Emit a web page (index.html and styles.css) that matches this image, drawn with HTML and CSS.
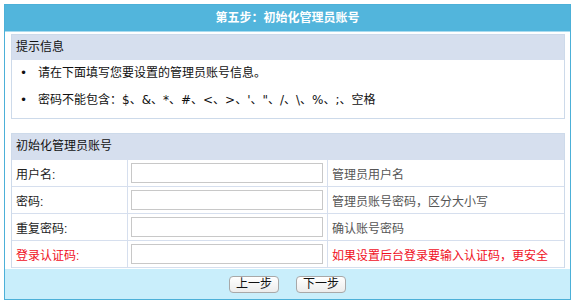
FILE: index.html
```html
<!DOCTYPE html>
<html lang="zh-CN">
<head>
    <meta charset="UTF-8">
    <title>第五步：初始化管理员账号</title>
    <link rel="stylesheet" href="styles.css">
</head>
<body>
    <div class="wrap">
        <div class="title">第五步：初始化管理员账号</div>

        <div class="content">
            <div class="panel">
                <div class="panel-hd">提示信息</div>
                <ul class="tips">
                    <li>请在下面填写您要设置的管理员账号信息。</li>
                    <li>密码不能包含：$、&amp;、*、#、&lt;、&gt;、'、"、/、\、%、;、空格</li>
                </ul>
            </div>

            <div class="panel panel-form">
                <div class="panel-hd">初始化管理员账号</div>
                <table class="form-table">
                    <tr>
                        <td class="label">用户名:</td>
                        <td class="field"><input type="text"></td>
                        <td class="note">管理员用户名</td>
                    </tr>
                    <tr>
                        <td class="label">密码:</td>
                        <td class="field"><input type="password"></td>
                        <td class="note">管理员账号密码，区分大小写</td>
                    </tr>
                    <tr>
                        <td class="label">重复密码:</td>
                        <td class="field"><input type="password"></td>
                        <td class="note">确认账号密码</td>
                    </tr>
                    <tr class="red">
                        <td class="label">登录认证码:</td>
                        <td class="field"><input type="text"></td>
                        <td class="note">如果设置后台登录要输入认证码，更安全</td>
                    </tr>
                </table>
            </div>
        </div>

        <div class="footer">
            <button type="button">上一步</button>
            <button type="button">下一步</button>
        </div>
    </div>
</body>
</html>
```

FILE: styles.css
```css
body {
    margin: 4px;
    background: #fff;
    font-family: "Liberation Sans", "Noto Sans CJK SC", sans-serif;
    font-size: 12px;
    color: #222;
}

.wrap {
    border: 1px solid #4cb0d8;
}

.title {
    background: #52b5dc;
    color: #fff;
    font-weight: bold;
    text-align: center;
    height: 26px;
    line-height: 26px;
    font-size: 12px;
    border-bottom: 1px solid #a9dbef;
}

.content {
    padding: 2px 5px 0 6px;
}

.panel {
    border: 1px solid #cddaea;
}

.panel-form {
    margin-top: 14px;
    border-bottom: none;
}

.panel-hd {
    background: #d6dfee;
    height: 25px;
    line-height: 25px;
    padding-left: 4px;
    font-size: 12px;
    color: #111;
}

/* lista de dicas com marcador proprio */
.tips {
    list-style: none;
    margin: 0;
    padding: 0 0 4px 0;
    background: #fff;
    font-family: "DejaVu Sans", "Noto Sans CJK SC", sans-serif;
}

.tips li {
    height: 27px;
    line-height: 27px;
    padding-left: 8px;
    overflow: hidden;
    color: #111;
}

.tips li::before {
    content: "\2022";
    display: inline-block;
    width: 18px;
}

.form-table {
    width: 100%;
    border-collapse: collapse;
}

.form-table td {
    border-top: 1px solid #d6dfee;
    border-bottom: 1px solid #d6dfee;
    height: 26px;
    padding: 0;
}

.form-table td + td {
    border-left: 1px solid #d6dfee;
}

.label {
    width: 111px;
    padding-left: 4px !important;
    color: #222;
}

.field {
    width: 196px;
    padding-left: 3px !important;
}

.field input {
    display: block;
    box-sizing: border-box;
    width: 192px;
    height: 20px;
    margin: 0;
    border: 1px solid #c8c8c8;
    padding: 0 3px;
}

.note {
    padding-left: 4px !important;
    color: #555;
}

.red td {
    color: #f0101e;
}

.footer {
    margin-top: 1px;
    background: #c9eefb;
    height: 30px;
    display: flex;
    justify-content: center;
    align-items: center;
    gap: 17px;
}

.footer button {
    height: 17px;
    padding: 0 6px;
    font-family: inherit;
    font-size: 12px;
    line-height: 15px;
    color: #111;
    background: linear-gradient(#fff, #ececec);
    border: 1px solid #a8a8a8;
    border-radius: 4px;
    cursor: pointer;
}
```
